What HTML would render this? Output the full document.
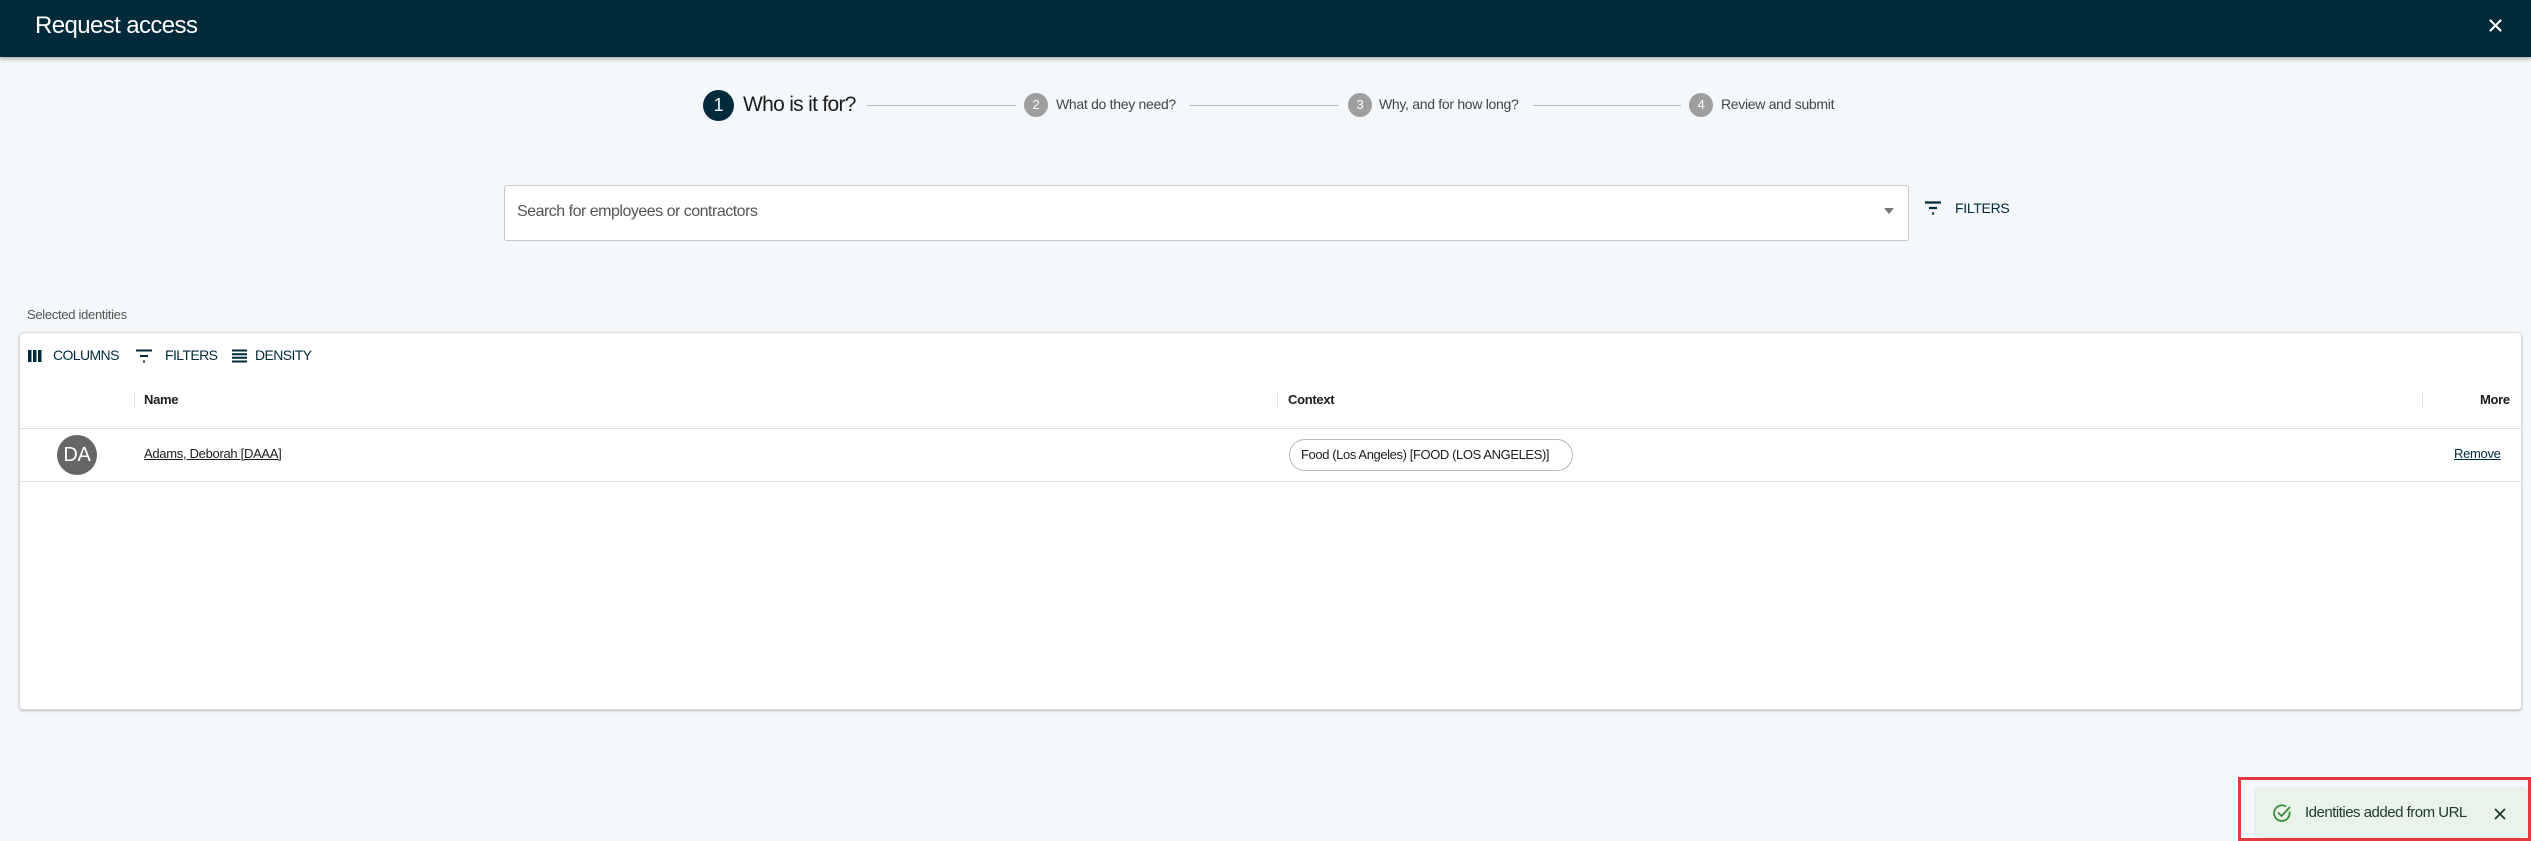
<!DOCTYPE html>
<html><head><meta charset="utf-8"><style>
*{box-sizing:border-box;margin:0;padding:0}
body{width:2531px;height:841px;background:#f4f8fb;font-family:"Liberation Sans",sans-serif;position:relative;overflow:hidden;color:#1c1c1c;letter-spacing:-0.3px}
.abs{position:absolute}
.hdr{left:0;top:0;width:2531px;height:57px;background:#012a3a;box-shadow:0 2px 4px rgba(0,0,0,.3)}
.line{height:1px;background:#b5b5b5;top:105px}
.circ{border-radius:50%;background:#9e9e9e;color:#fff;font-size:13px;text-align:center;width:24px;height:24px;line-height:24px;top:93px}
.stxt{font-size:14px;color:#444;top:96px}
</style></head><body>
<div class="abs hdr"></div>
<div class="abs" style="left:35px;top:12px;font-size:24px;color:#fff;letter-spacing:-0.6px">Request access</div>
<svg class="abs" style="left:2488px;top:18px" width="15" height="15" viewBox="0 0 16 16"><path d="M2 2L14 14M14 2L2 14" stroke="#fff" stroke-width="2.2"/></svg>

<div class="abs" style="left:703px;top:90px;width:31px;height:31px;border-radius:50%;background:#012a3a;color:#fff;font-size:18px;text-align:center;line-height:31px">1</div>
<div class="abs" style="left:743px;top:93px;font-size:21px;color:#1c1c1c;letter-spacing:-0.7px">Who is it for?</div>
<div class="abs line" style="left:867px;width:149px"></div>
<div class="abs circ" style="left:1024px">2</div>
<div class="abs stxt" style="left:1056px">What do they need?</div>
<div class="abs line" style="left:1190px;width:148px"></div>
<div class="abs circ" style="left:1348px">3</div>
<div class="abs stxt" style="left:1379px">Why, and for how long?</div>
<div class="abs line" style="left:1533px;width:148px"></div>
<div class="abs circ" style="left:1689px">4</div>
<div class="abs stxt" style="left:1721px">Review and submit</div>

<div class="abs" style="left:504px;top:185px;width:1405px;height:56px;background:#fff;border:1px solid #c8c8c8;border-radius:3px"></div>
<div class="abs" style="left:517px;top:203px;font-size:16px;color:#555;letter-spacing:-0.5px">Search for employees or contractors</div>
<div class="abs" style="left:1884px;top:208px;width:0;height:0;border-left:5px solid transparent;border-right:5px solid transparent;border-top:6px solid #777"></div>
<svg class="abs" style="left:1924px;top:201px" width="18" height="14" viewBox="0 0 18 14"><path d="M1 1.5H17M5 7H13M8 12.5H10" stroke="#012a3a" stroke-width="2.2"/></svg>
<div class="abs" style="left:1955px;top:200px;font-size:14px;color:#012a3a">FILTERS</div>

<div class="abs" style="left:27px;top:307px;font-size:13px;color:#555">Selected identities</div>
<div class="abs" style="left:19px;top:332px;width:2503px;height:378px;background:#fff;border:1px solid #ddd;border-radius:4px;box-shadow:0 1px 2px rgba(0,0,0,.25)"></div>
<svg class="abs" style="left:28px;top:350px" width="14" height="12"><rect x="0" y="0" width="3.5" height="12" fill="#012a3a"/><rect x="5" y="0" width="3.5" height="12" fill="#012a3a"/><rect x="10" y="0" width="3.5" height="12" fill="#012a3a"/></svg>
<div class="abs" style="left:53px;top:347px;font-size:14px;color:#012a3a;letter-spacing:-0.6px">COLUMNS</div>
<svg class="abs" style="left:135px;top:349px" width="18" height="14" viewBox="0 0 18 14"><path d="M1 1.5H17M5 7H13M8 12.5H10" stroke="#012a3a" stroke-width="2"/></svg>
<div class="abs" style="left:165px;top:347px;font-size:14px;color:#012a3a;letter-spacing:-0.6px">FILTERS</div>
<svg class="abs" style="left:232px;top:349px" width="15" height="14" viewBox="0 0 15 14"><path d="M0 1.5H15M0 5.2H15M0 8.8H15M0 12.5H15" stroke="#012a3a" stroke-width="2"/></svg>
<div class="abs" style="left:255px;top:347px;font-size:14px;color:#012a3a;letter-spacing:-0.6px">DENSITY</div>

<div class="abs" style="left:134px;top:393px;width:1px;height:14px;background:#ddd"></div>
<div class="abs" style="left:144px;top:392px;font-size:13px;font-weight:bold">Name</div>
<div class="abs" style="left:1277px;top:393px;width:1px;height:14px;background:#ddd"></div>
<div class="abs" style="left:1288px;top:392px;font-size:13px;font-weight:bold">Context</div>
<div class="abs" style="left:2422px;top:393px;width:1px;height:14px;background:#ddd"></div>
<div class="abs" style="left:2480px;top:392px;font-size:13px;font-weight:bold">More</div>
<div class="abs" style="left:20px;top:428px;width:2501px;height:1px;background:#e0e0e0"></div>
<div class="abs" style="left:57px;top:435px;width:40px;height:40px;border-radius:50%;background:#666;color:#fff;font-size:20px;text-align:center;line-height:40px">DA</div>
<div class="abs" style="left:144px;top:446px;font-size:13px;text-decoration:underline;color:#1c1c1c">Adams, Deborah [DAAA]</div>
<div class="abs" style="left:1289px;top:439px;width:284px;height:32px;border:1px solid #bbb;border-radius:16px;font-size:13px;line-height:30px;padding-left:11px;letter-spacing:-0.4px">Food (Los Angeles) [FOOD (LOS ANGELES)]</div>
<div class="abs" style="left:2454px;top:446px;font-size:13px;text-decoration:underline;color:#012a3a">Remove</div>
<div class="abs" style="left:20px;top:481px;width:2501px;height:1px;background:#e0e0e0"></div>

<div class="abs" style="left:2238px;top:777px;width:293px;height:64px;border:3px solid #e53940"></div>
<div class="abs" style="left:2256px;top:789px;width:270px;height:48px;background:#eaf3e9;box-shadow:0 0 3px rgba(0,0,0,.15)"></div>
<svg class="abs" style="left:2272px;top:803px" width="20" height="20" viewBox="0 0 20 20"><path d="M17.5 8.5A7.8 7.8 0 1 1 14 3.5" fill="none" stroke="#3a8a3e" stroke-width="1.8"/><path d="M6 9.5L9.5 13L18 4" fill="none" stroke="#3a8a3e" stroke-width="1.8"/></svg>
<div class="abs" style="left:2305px;top:804px;font-size:15px;color:#1f3a2a;letter-spacing:-0.5px">Identities added from URL</div>
<svg class="abs" style="left:2494px;top:808px" width="12" height="12" viewBox="0 0 12 12"><path d="M1 1L11 11M11 1L1 11" stroke="#1f3a2a" stroke-width="1.8"/></svg>
</body></html>
